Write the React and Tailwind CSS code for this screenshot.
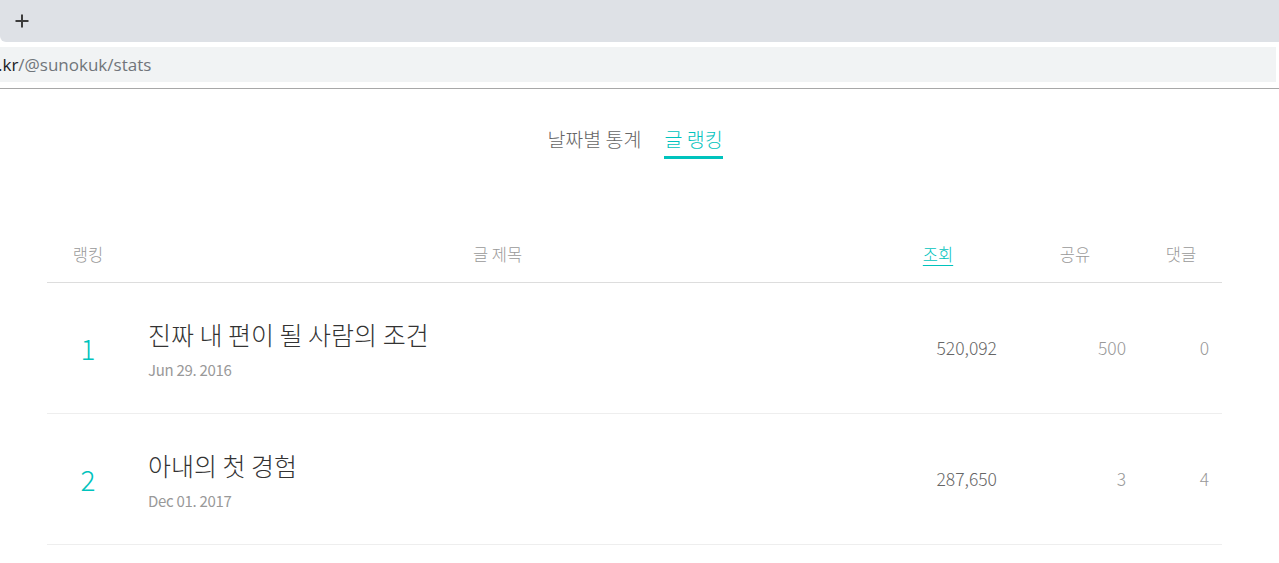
const rows = [
  { rank: 1, title: "진짜 내 편이 될 사람의 조건", date: "Jun 29. 2016", views: "520,092", shares: "500", comments: "0" },
  { rank: 2, title: "아내의 첫 경험", date: "Dec 01. 2017", views: "287,650", shares: "3", comments: "4" },
];

const font = { fontFamily: '"Noto Sans CJK KR", "Noto Sans", sans-serif' };

const BrowserChrome = () => (
  <div className="bg-white">
    <div className="h-[42px] bg-[#dee1e6] flex items-center pl-[15px] rounded-bl-[6px]">
      <svg width="14" height="14" viewBox="0 0 14 14" className="mb-[1px]">
        <path d="M7 0.5v13M0.5 7h13" stroke="#3c3c3c" strokeWidth="2" />
      </svg>
    </div>
    <div className="h-[5px]" />
    <div
      className="h-[35px] bg-[#f1f3f4] flex items-center text-[17px] text-[#70757a] mr-[3px]"
      style={{ fontFamily: '"Open Sans", "Noto Sans", sans-serif' }}
    >
      <span className="-ml-[2px]">
        <span className="text-[#202124]">.kr</span>/@sunokuk/stats
      </span>
    </div>
    <div className="h-[6px]" />
    <div className="h-[1px] bg-[#a8a8a8]" />
  </div>
);

const App = () => {
  return (
    <div className="w-[1279px] h-[563px] overflow-hidden bg-white" style={font}>
      <BrowserChrome />

      <div className="flex justify-center gap-[23px] pt-[36px] pr-[9px]">
        <div className="text-[19.5px] text-[#666] leading-[28px] pb-[6px] font-light">날짜별 통계</div>
        <div className="text-[19.5px] text-[#00c3bd] leading-[28px] pb-[3px] border-b-[3px] border-[#00c3bd] font-light">
          글 랭킹
        </div>
      </div>

      <div className="mx-[47px] w-[1175px] mt-[68px]">
        <div className="flex items-center h-[56px] border-b border-[#ddd] text-[16.5px] text-[#999] font-light">
          <div className="w-[82px] text-center">랭킹</div>
          <div className="w-[737px] text-center">글 제목</div>
          <div className="w-[144px] text-center">
            <span className="text-[#00c3bd] underline underline-offset-[4px]">조회</span>
          </div>
          <div className="w-[130px] text-center">공유</div>
          <div className="w-[82px] text-center">댓글</div>
        </div>

        {rows.map((row) => (
          <div key={row.rank} className="flex items-center h-[131px] border-b border-[#eee]">
            <div className="w-[82px] text-center text-[28px] font-light text-[#00c3bd]">{row.rank}</div>
            <div className="w-[737px] pl-[19px] pt-[1px]">
              <div className="text-[25px] text-[#333] leading-[34px] font-light">{row.title}</div>
              <div className="text-[15px] text-[#999] leading-[20px] mt-[9px] tracking-[-0.3px]">{row.date}</div>
            </div>
            <div className="w-[144px] text-right pr-[13px] text-[17.5px] text-[#666] font-light">{row.views}</div>
            <div className="w-[130px] text-right pr-[14px] text-[17.5px] text-[#999] font-light">{row.shares}</div>
            <div className="w-[82px] text-right pr-[13px] text-[17.5px] text-[#999] font-light">{row.comments}</div>
          </div>
        ))}
      </div>
    </div>
  );
};

export default App;
